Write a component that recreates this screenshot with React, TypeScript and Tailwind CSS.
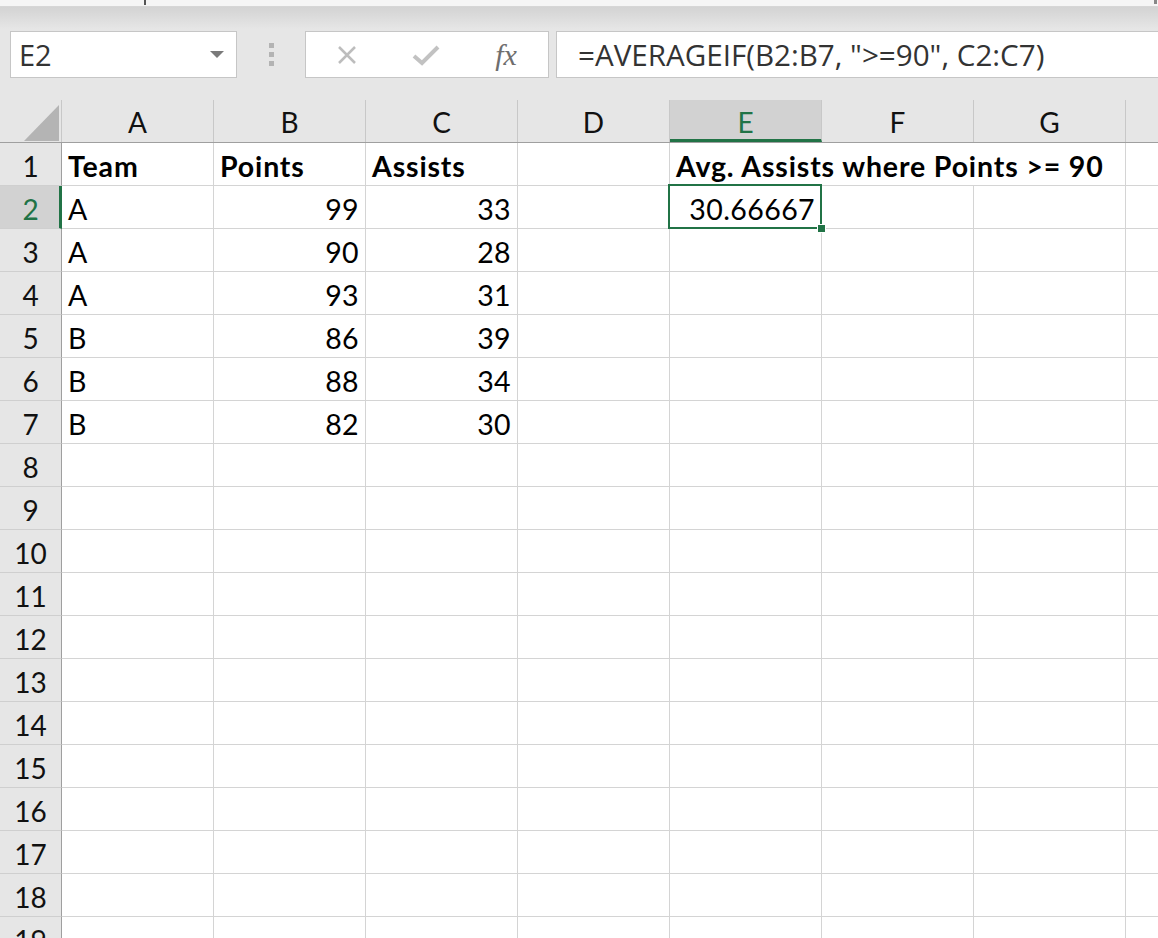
import React from "react";

const COLS = ["A", "B", "C", "D", "E", "F", "G", "H"];

type Cell = { v: string; num?: boolean; bold?: boolean; over?: boolean };

const DATA: Record<number, Cell[]> = {
  1: [
    { v: "Team", bold: true },
    { v: "Points", bold: true },
    { v: "Assists", bold: true },
    { v: "" },
    { v: "Avg. Assists where Points >= 90", bold: true, over: true },
  ],
  2: [{ v: "A" }, { v: "99", num: true }, { v: "33", num: true }, { v: "" }, { v: "30.66667", num: true }],
  3: [{ v: "A" }, { v: "90", num: true }, { v: "28", num: true }],
  4: [{ v: "A" }, { v: "93", num: true }, { v: "31", num: true }],
  5: [{ v: "B" }, { v: "86", num: true }, { v: "39", num: true }],
  6: [{ v: "B" }, { v: "88", num: true }, { v: "34", num: true }],
  7: [{ v: "B" }, { v: "82", num: true }, { v: "30", num: true }],
};

const cellFont = { fontFamily: "Lato, 'Open Sans', sans-serif" };
const uiFont = { fontFamily: "'Open Sans', 'Noto Sans', sans-serif" };

function Toolbar() {
  return (
    <div className="h-[93px] bg-[#e6e6e6] relative">
      <div className="h-[22px] bg-gradient-to-b from-[#d3d3d3] to-[#e6e6e6]" />
      <div className="absolute left-0 right-0 top-[24px] flex items-stretch h-[47px]">
        <div className="ml-[10px] w-[227px] bg-white border border-[#c6c6c6] flex items-center justify-between pl-[8px] pr-[12px]">
          <span className="text-[29px] text-[#333] leading-none" style={uiFont}>
            E2
          </span>
          <svg width="14" height="8" viewBox="0 0 14 8">
            <polygon points="0,0 14,0 7,7" fill="#7a7a7a" />
          </svg>
        </div>
        <div className="w-[68px] flex flex-col items-center justify-center gap-[4px]">
          <div className="w-[5px] h-[5px] bg-[#b3b3b3]" />
          <div className="w-[5px] h-[5px] bg-[#b3b3b3]" />
          <div className="w-[5px] h-[5px] bg-[#b3b3b3]" />
        </div>
        <div className="w-[244px] bg-white border border-[#c6c6c6] flex items-center">
          <div className="w-[80px] flex justify-center pl-[2px]">
            <svg width="22" height="22" viewBox="0 0 22 22">
              <path d="M3 3 L19 19 M19 3 L3 19" stroke="#bdbdbd" strokeWidth="2.5" fill="none" />
            </svg>
          </div>
          <div className="w-[80px] flex justify-center">
            <svg width="28" height="22" viewBox="0 0 28 22">
              <path d="M2 12 L10 19 L26 3" stroke="#c2c2c2" strokeWidth="4" fill="none" />
            </svg>
          </div>
          <div className="w-[80px] flex justify-center">
            <span
              className="italic text-[30px] text-[#6e6e6e] leading-none"
              style={{ fontFamily: "'Liberation Serif', 'DejaVu Serif', serif" }}
            >
              fx
            </span>
          </div>
        </div>
        <div className="ml-[7px] flex-1 bg-white border-y border-l border-[#c6c6c6] flex items-center pl-[21px]">
          <span className="text-[29.6px] text-[#333] leading-none whitespace-nowrap" style={uiFont}>
            =AVERAGEIF(B2:B7, "&gt;=90", C2:C7)
          </span>
        </div>
      </div>
    </div>
  );
}

function HeaderRow() {
  return (
    <div className="flex h-[43px] bg-[#e6e6e6] border-b border-[#9f9f9f]">
      <div className="w-[62px] shrink-0 border-r border-[#c8c8c8] relative">
        <svg className="absolute left-0 top-0" width="61" height="42" viewBox="0 0 61 42">
          <polygon points="24,41 59,41 59,5" fill="#b4b4b4" />
        </svg>
      </div>
      {COLS.map((c) => {
        const sel = c === "E";
        return (
          <div
            key={c}
            className={
              sel
                ? "w-[152px] shrink-0 border-r border-[#c8c8c8] bg-[#d2d2d2] border-b-[3px] border-b-[#217346] flex items-center justify-center pt-[5px]"
                : "w-[152px] shrink-0 border-r border-[#c8c8c8] flex items-center justify-center pt-[2px]"
            }
          >
            {c !== "H" ? (
              <span
                className={sel ? "text-[28px] text-[#217346] leading-none" : "text-[28px] text-[#111] leading-none"}
                style={cellFont}
              >
                {c}
              </span>
            ) : null}
          </div>
        );
      })}
    </div>
  );
}

function Row({ r }: { r: number }) {
  const cells = DATA[r] || [];
  const selRow = r === 2;
  return (
    <div className="flex h-[43px]">
      <div
        className={
          selRow
            ? "w-[62px] shrink-0 bg-[#d2d2d2] border-r-[3px] border-r-[#217346] border-b border-b-[#cfcfcf] flex items-center justify-center pt-[4px] pl-[2px]"
            : "w-[62px] shrink-0 bg-[#e6e6e6] border-r border-r-[#9f9f9f] border-b border-b-[#cfcfcf] flex items-center justify-center pt-[4px]"
        }
      >
        <span
          className={selRow ? "text-[28px] text-[#217346] leading-none" : "text-[28px] text-[#111] leading-none"}
          style={cellFont}
        >
          {r}
        </span>
      </div>
      {COLS.map((c, i) => {
        const cell = cells[i];
        const hideRight = r === 1 && (c === "E" || c === "F");
        const isSel = r === 2 && c === "E";
        const base = hideRight
          ? "w-[152px] shrink-0 border-b border-[#d4d4d4] bg-white flex items-center pt-[4px]"
          : "w-[152px] shrink-0 border-r border-b border-[#d4d4d4] bg-white flex items-center pt-[4px]";
        return (
          <div key={c} className={isSel ? base + " relative" : base}>
            {cell && cell.v ? (
              <span
                className={
                  (cell.num ? "ml-auto pr-[6px] " : "pl-[6px] ") +
                  (cell.bold ? "font-bold tracking-[0.85px] " : "tracking-[0.4px] ") +
                  (cell.over ? "relative z-10 " : "") +
                  "text-[28.5px] text-black leading-none whitespace-nowrap"
                }
                style={cellFont}
              >
                {cell.v}
              </span>
            ) : null}
            {isSel ? (
              <>
                <div className="absolute -left-[2px] -top-[2px] -right-[1px] -bottom-[1px] border-2 border-[#217346] pointer-events-none" />
                <div className="absolute -right-[5px] -bottom-[5px] w-[9px] h-[9px] bg-[#217346] border border-white" />
              </>
            ) : null}
          </div>
        );
      })}
    </div>
  );
}

export default function App() {
  const rows = Array.from({ length: 19 }, (_, i) => i + 1);
  return (
    <div className="w-[1158px] h-[938px] overflow-hidden bg-white">
      <div className="h-[7px] bg-[#f5f5f5] border-b border-[#d6d6d6] relative">
        <div className="absolute left-[144px] top-0 w-[2px] h-[5px] bg-[#555]" />
        <div className="absolute left-[1154px] top-0 w-[3px] h-[4px] bg-[#888]" />
      </div>
      <Toolbar />
      <HeaderRow />
      {rows.map((r) => (
        <Row key={r} r={r} />
      ))}
    </div>
  );
}
